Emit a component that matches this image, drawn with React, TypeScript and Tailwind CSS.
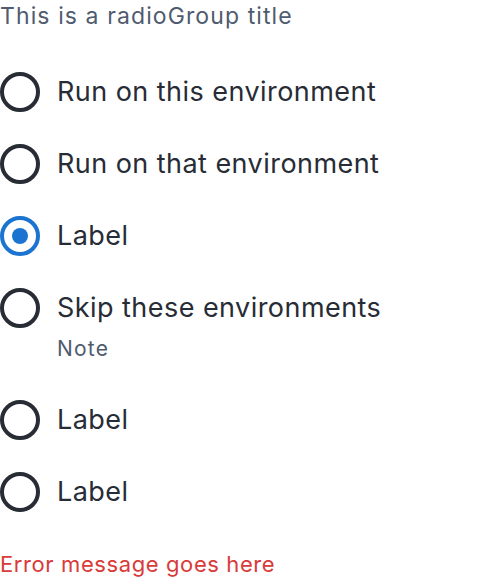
const options = [
  { id: 'this', label: 'Run on this environment' },
  { id: 'that', label: 'Run on that environment' },
  { id: 'label-1', label: 'Label' },
  { id: 'skip', label: 'Skip these environments', note: 'Note' },
  { id: 'label-2', label: 'Label' },
  { id: 'label-3', label: 'Label' },
]

function Radio({ checked }: { checked: boolean }) {
  return (
    <span
      className={
        checked
          ? 'flex h-10 w-10 shrink-0 items-center justify-center rounded-full border-4 border-[#1b75d0]'
          : 'flex h-10 w-10 shrink-0 items-center justify-center rounded-full border-4 border-[#272c35]'
      }
    >
      {checked && <span className="h-4 w-4 rounded-full bg-[#1b75d0]" />}
    </span>
  )
}

export default function App() {
  const selected = 'label-1'

  return (
    <div className="bg-white font-['Inter',sans-serif]">
      <div className="text-[23px] leading-8 tracking-[1.1px] text-[#4f5b6e]">This is a radioGroup title</div>
      <div className="mt-6 flex flex-col">
        {options.map((o) => (
          <label key={o.id} className={o.note ? 'flex items-start gap-[17px] pt-4 pb-[23px]' : 'flex items-start gap-[17px] py-4'}>
            <Radio checked={o.id === selected} />
            <div>
              <div className="text-[27px] leading-10 tracking-[0.45px] text-[#272c35]">{o.label}</div>
              {o.note && <div className="mt-[9px] text-[21px] leading-6 tracking-[1.2px] text-[#4f5b6e]">{o.note}</div>}
            </div>
          </label>
        ))}
      </div>
      <div className="mt-5 text-[22px] leading-8 tracking-[0.6px] text-[#d93a3a]">Error message goes here</div>
    </div>
  )
}
